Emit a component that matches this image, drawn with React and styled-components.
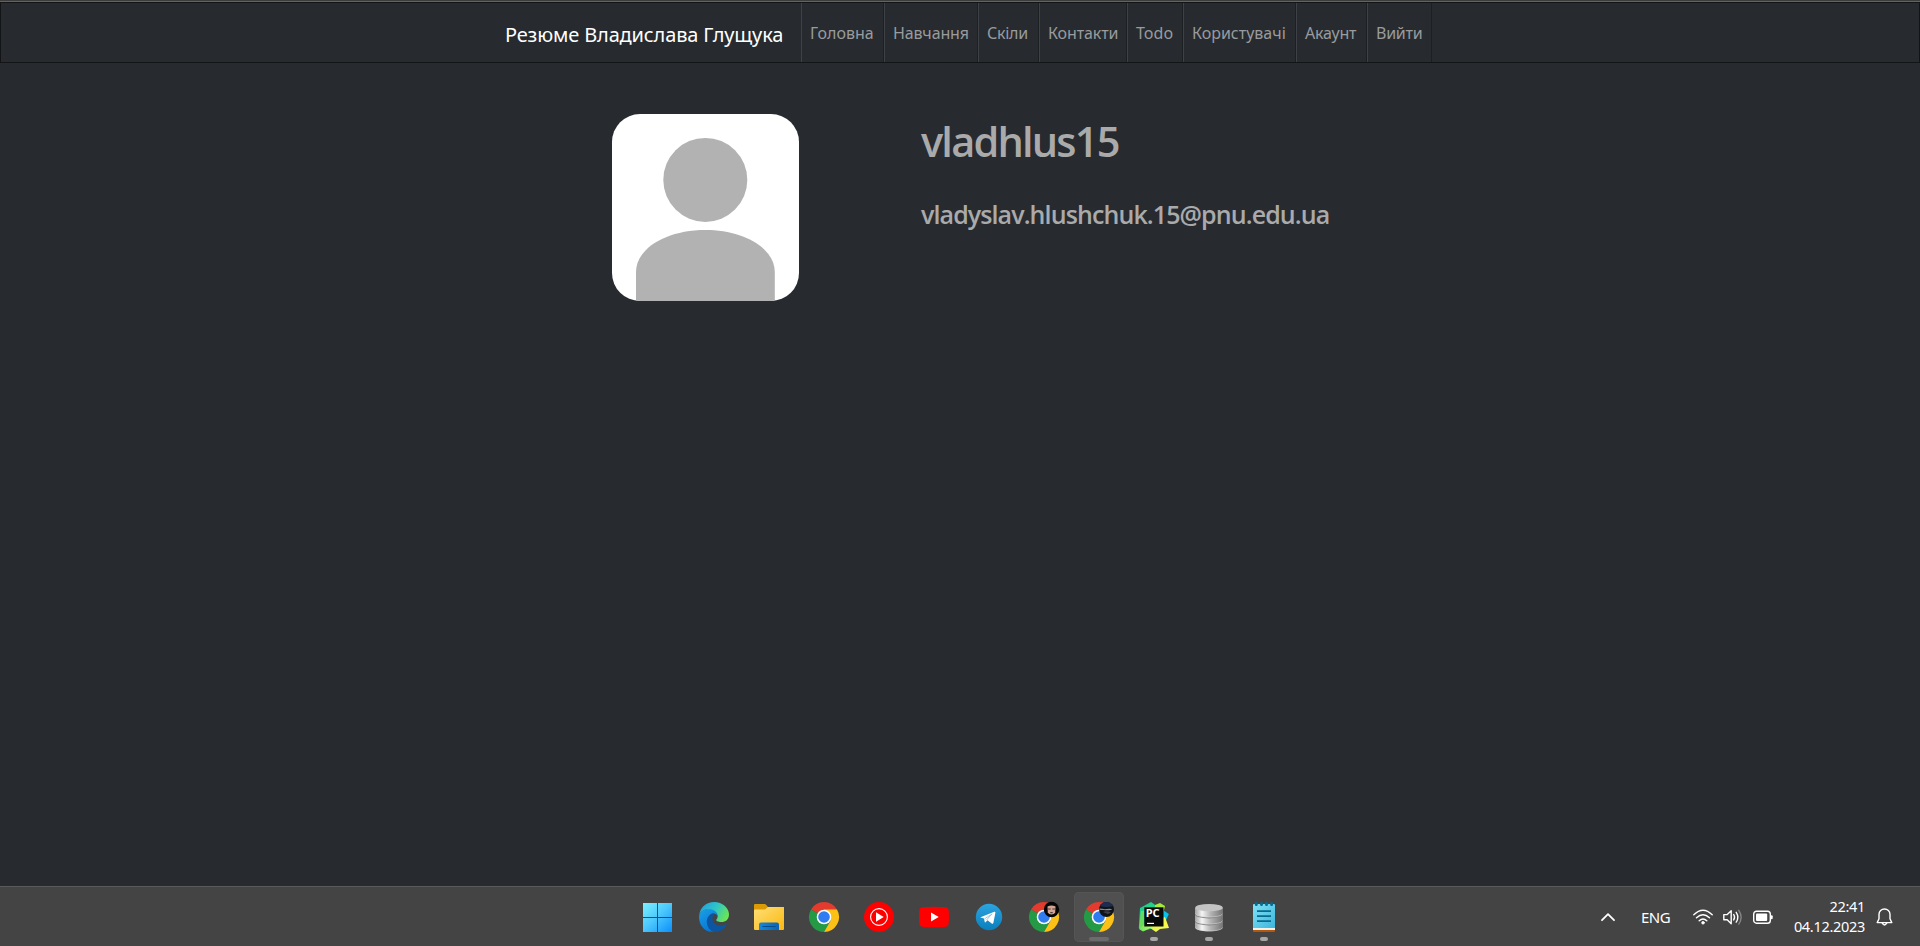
import React from "react";
import styled, { createGlobalStyle } from "styled-components";

const GlobalStyle = createGlobalStyle`
  * { box-sizing: border-box; }
  body {
    margin: 0;
    background: #272b30;
    font-family: "Noto Sans", "Open Sans", sans-serif;
    overflow: hidden;
  }
`;

const Screen = styled.div`
  display: flex;
  flex-direction: column;
  height: 946px;
  background: #272b30;
`;

const TopEdge = styled.div`
  height: 2px;
  flex: none;
  background: #3c3c3c;
  border-bottom: 1px solid #636363;
`;

const Navbar = styled.nav`
  display: flex;
  flex: none;
  height: 61px;
  padding-left: 504px;
  border: 1px solid #121416;
`;

const Brand = styled.a`
  width: 296px;
  line-height: 27px;
  padding-top: 18px;
  font-size: 20px;
  letter-spacing: ${(p) => p.$spacing}px;
  white-space: nowrap;
  color: #fff;
`;

const NavList = styled.ul`
  display: flex;
  margin: 0;
  padding: 0;
  list-style: none;
`;

const NavItem = styled.li`
  width: ${(p) => p.$width}px;
  padding: 18px 0 0 8px;
  border-left: 1px solid #3e4247;
  border-right: 1px solid #1d2023;
  font-size: 16px;
  line-height: 24px;
  letter-spacing: ${(p) => p.$spacing}px;
  white-space: nowrap;
  color: #999b9d;
`;

const Profile = styled.main`
  display: flex;
  flex: 1;
  align-items: flex-start;
  gap: 122px;
  padding: 51px 0 0 612px;
`;

const Avatar = styled.svg`
  display: block;
  width: 187px;
  height: 187px;
  border-radius: 28px;
  background: #fff;
`;

const Details = styled.section`
  display: flex;
  flex-direction: column;
  color: #aaa;
  font-family: "Open Sans", "Noto Sans", sans-serif;
  white-space: nowrap;
`;

const UserName = styled.h1`
  margin: 0;
  font-size: 41.5px;
  line-height: 54px;
  font-weight: 600;
  letter-spacing: ${(p) => p.$spacing}px;
`;

const Email = styled.h4`
  margin: 30px 0 0;
  font-size: 25px;
  line-height: 32px;
  font-weight: 600;
  letter-spacing: ${(p) => p.$spacing}px;
`;

const Taskbar = styled.footer`
  display: flex;
  flex: none;
  align-items: center;
  height: 60px;
  padding: 0 27px 0 634px;
  border-top: 1px solid #5a5b5c;
  background: #444;
`;

const Apps = styled.div`
  display: flex;
  gap: 5px;
`;

const AppButton = styled.div`
  display: flex;
  flex-direction: column;
  align-items: center;
  width: 50px;
  height: 50px;
  padding-top: 10px;
  border-radius: 5px;
  background: ${(p) => (p.$active ? "#505050" : "transparent")};
  box-shadow: ${(p) => (p.$active ? "inset 0 0 0 1px #555" : "none")};
`;

const AppIcon = styled.svg`
  display: block;
  width: 30px;
  height: 30px;
  overflow: visible;
`;

const Indicator = styled.span`
  width: ${(p) => (p.$active ? 20 : 8)}px;
  height: 4px;
  margin-top: 5px;
  border-radius: 2px;
  background: ${(p) => (p.$active ? "#6b6b6b" : "#a6a6a6")};
`;

const Tray = styled.div`
  display: flex;
  align-items: center;
  margin-left: auto;
  color: #fff;
`;

const TrayIcon = styled.svg`
  display: block;
  width: ${(p) => p.$width}px;
  height: 20px;
  margin-right: ${(p) => p.$after || 0}px;
  fill: none;
  stroke: #fff;
  stroke-width: 1.4;
  stroke-linecap: round;
  stroke-linejoin: round;
`;

const Language = styled.span`
  width: 52px;
  font-size: 15px;
  line-height: 20px;
  letter-spacing: -0.55px;
`;

const Clock = styled.div`
  display: flex;
  flex-direction: column;
  align-items: flex-end;
  width: 73px;
  margin: 0 11px 2px 0;
  font-size: 14.5px;
  line-height: 20px;
  letter-spacing: -0.3px;
  white-space: nowrap;
`;

const navItems = [
  ["Головна", 83, 0],
  ["Навчання", 94, -0.15],
  ["Скіли", 61, -0.25],
  ["Контакти", 88, -0.1],
  ["Todo", 56, 0.05],
  ["Користувачі", 113, 0],
  ["Акаунт", 71, -0.2],
  ["Вийти", 65, -0.25],
];

function WindowsIcon() {
  return (
    <AppIcon viewBox="0 0 30 30">
      <defs>
        <linearGradient id="win" gradientUnits="userSpaceOnUse" x1="0" y1="1" x2="27" y2="30">
          <stop offset="0" stopColor="#7cf0ff" />
          <stop offset="0.5" stopColor="#4cc8fb" />
          <stop offset="1" stopColor="#0f93fb" />
        </linearGradient>
      </defs>
      <path fill="url(#win)" d="M0 1h14v14H0zM15 1h14v14H15zM0 16h14v14H0zM15 16h14v14H15z" transform="translate(-1)" />
    </AppIcon>
  );
}

function EdgeIcon() {
  return (
    <AppIcon viewBox="0 0 30 30">
      <defs>
        <linearGradient id="edgeTop" x1="0" y1="0.2" x2="1" y2="0.6">
          <stop offset="0" stopColor="#249fdc" />
          <stop offset="0.5" stopColor="#2dc4cb" />
          <stop offset="1" stopColor="#6ce652" />
        </linearGradient>
        <linearGradient id="edgeLeft" x1="0" y1="0" x2="0.6" y2="1">
          <stop offset="0" stopColor="#1aa0e6" />
          <stop offset="1" stopColor="#0873d2" />
        </linearGradient>
      </defs>
      <path fill="url(#edgeLeft)" d="M0 15C0 9 6 7 10.5 7c6 0 9.500 3.500 9 7.500-1-2-3.500-3.500-6-3-5 1-5 12 5 15.500-1 2-4 3-6 2.800C5 29.500 0 22.500 0 15z" />
      <path fill="#0c55a0" d="M13.500 11.500c-7 2-8 13 0 18 6 1.500 12-2 14-6.500.3-.8-.3-1.200-1-.8-7 3.200-13.500-.5-13-6 .1-2 1-3.500 2-4.200z" />
      <path fill="url(#edgeTop)" d="M.1 13C1.500 5 7.500 0 15 0c8.500 0 15 6 15 12.500 0 5-3.500 7.500-7.500 7.500-3.500 0-5.700-1.200-5.200-2.200 3.500-4 .4-10.300-6.300-10.600C6 7 1.500 9 .1 13z" />
    </AppIcon>
  );
}

function FolderIcon() {
  return (
    <AppIcon viewBox="0 0 30 30">
      <defs>
        <linearGradient id="folder" x1="0" y1="0" x2="1" y2="1">
          <stop offset="0" stopColor="#ffdf77" />
          <stop offset="1" stopColor="#fbb80f" />
        </linearGradient>
        <linearGradient id="folderBase" x1="0" y1="0" x2="1" y2="0">
          <stop offset="0" stopColor="#1489dc" />
          <stop offset="1" stopColor="#0763b5" />
        </linearGradient>
      </defs>
      <path fill="#dc9b05" d="M0 3q0-1 1-1h9.500q1 0 1.600.7L14 5h15q1 0 1 1v8H0z" />
      <path fill="url(#folder)" d="M0 8.500q0-1 1-1h10L14 5h15.500q.5 0 .5.700V27q0 1-1 1H1q-1 0-1-1z" />
      <path fill="url(#folderBase)" d="M5 28v-5.500Q5 20.500 7 20.500h16q2 0 2 2V28z" />
      <rect x="8.300" y="24" width="13.400" height="1" rx=".5" fill="#064a8c" />
    </AppIcon>
  );
}

function ChromeLogo() {
  return (
    <g>
      <path fill="#e33b2e" d="M15 15 2 7.500A15 15 0 0 1 28 7.500z" />
      <path fill="#249a45" d="M15 15 2 7.500A15 15 0 0 0 15 30L21.500 18.700z" />
      <path fill="#fbc116" d="M15 7.500H28A15 15 0 0 1 15 30L21.500 18.700z" />
      <circle cx="15" cy="15" r="7.300" fill="#fff" />
      <circle cx="15" cy="15" r="5.800" fill="#2f7bf0" />
    </g>
  );
}

function ChromeIcon({ profile }) {
  return (
    <AppIcon viewBox="0 0 30 30">
      <ChromeLogo />
      {profile === "face" && (
        <g>
          <circle cx="22.500" cy="7.500" r="7.700" fill="#050505" />
          <path fill="#d3a594" d="M18.500 4.500q4-2 8 0l-.3 6q-1 2-3.700 2t-3.700-2z" />
          <path stroke="#4a3a38" strokeWidth="1.100" fill="none" d="M18.700 7h3m1.500 0h3M21.300 10.600h2.400" />
        </g>
      )}
      {profile === "photo" && (
        <g>
          <circle cx="22.500" cy="7.500" r="7.500" fill="#101418" />
          <path fill="#1d2c50" d="M15.800 4A7.500 7.500 0 0 1 29 4q-6 2.200-13.200 0z" />
          <path fill="#8790a3" d="M15.500 6.500q3 .2 5 .8 4-.8 7-.4l.3.800q-5 1-12.400.1z" />
          <path fill="#3c4149" d="M19 10q4-1.500 8 .5l-3 1.500z" />
        </g>
      )}
    </AppIcon>
  );
}

function YoutubeMusicIcon() {
  return (
    <AppIcon viewBox="0 0 30 30">
      <circle cx="15" cy="15" r="15" fill="#f00" />
      <circle cx="15" cy="15" r="8.400" fill="none" stroke="#fff" strokeWidth="1.100" />
      <path fill="#fff" d="M12 10.300 19.700 15 12 19.700z" />
    </AppIcon>
  );
}

function YoutubeIcon() {
  return (
    <AppIcon viewBox="0 0 30 30">
      <path fill="#f00" d="M3.500 5.200q11.500-1 23 0 2.800.3 3.200 3.300.6 6.500 0 13-.4 3-3.200 3.300-11.500 1-23 0-2.800-.3-3.200-3.300-.6-6.500 0-13 .4-3 3.200-3.300z" />
      <path fill="#fff" d="M12 10.600 19.700 15 12 19.400z" />
    </AppIcon>
  );
}

function TelegramIcon() {
  return (
    <AppIcon viewBox="0 0 30 30">
      <defs>
        <linearGradient id="telegram" x1="0" y1="0" x2="0" y2="1">
          <stop offset="0" stopColor="#2ba4df" />
          <stop offset="1" stopColor="#0b7fbd" />
        </linearGradient>
      </defs>
      <circle cx="15" cy="15" r="13.200" fill="url(#telegram)" />
      <path fill="#fff" d="m6.500 15.200 13.800-5.500q1.300-.3 1.100 1.100l-2 10q-.4 1.500-1.700.7l-4.200-3.200-2 2q-.7.5-.8-.5l-.7-3.200-3.400-1q-.7-.2-.1-.4z" />
      <path stroke="#8ec3e2" strokeWidth=".9" fill="none" d="m10.500 16.800 7.500-4.800-5.500 6" />
    </AppIcon>
  );
}

const PcLabel = styled.text`
  font: 700 9.8px "Noto Sans", sans-serif;
  fill: #fff;
`;

function PycharmIcon() {
  return (
    <AppIcon viewBox="0 0 30 30">
      <defs>
        <linearGradient id="pycharm" x1="0" y1="0" x2="1" y2="0.3">
          <stop offset="0" stopColor="#21c98c" />
          <stop offset="1" stopColor="#21d789" />
        </linearGradient>
        <linearGradient id="pcBottom" x1="0" y1="0" x2="1" y2="0">
          <stop offset="0" stopColor="#58e46c" />
          <stop offset="0.5" stopColor="#e9f650" />
          <stop offset="1" stopColor="#fcf84a" />
        </linearGradient>
      </defs>
      <path fill="url(#pycharm)" d="M1 6 12 0l7 5v20L4 29-.2 26z" />
      <path fill="#a7eb38" d="m16 3 5-2 5 3-2 8-8-4z" />
      <path fill="#08c3ea" d="m24 8 5.800 4-4 9-3-8z" />
      <path fill="url(#pcBottom)" d="m0 27 6-5 20-7 4 11-9 1-4 3-6-4-7 3.500z" />
      <path fill="#b1e832" d="m2 9 3 0v15l-5 3z" opacity=".5" />
      <rect x="5.300" y="5.300" width="19.200" height="19.200" fill="#080a09" />
      <PcLabel x="6.700" y="15" textLength="14" lengthAdjust="spacingAndGlyphs">PC</PcLabel>
      <rect x="8" y="20.800" width="7" height="1.200" fill="#fff" />
    </AppIcon>
  );
}

function DatabaseIcon() {
  return (
    <AppIcon viewBox="0 0 30 30">
      <defs>
        <linearGradient id="disk" x1="0" y1="0" x2="1" y2="0">
          <stop offset="0" stopColor="#a3a3a3" />
          <stop offset="0.250" stopColor="#f5f5f5" />
          <stop offset="0.550" stopColor="#b5b5b5" />
          <stop offset="1" stopColor="#737373" />
        </linearGradient>
      </defs>
      {[18, 11, 4].map((y) => (
        <g key={y} transform={`translate(0 ${y})`}>
          <path fill="url(#disk)" d="M1 2v5.500c1 5 27 5 28 0V2z" />
          <path fill="none" stroke="#dcdcdc" strokeWidth=".5" d="M1.500 7.800c2 4.300 25 4.300 27 0" />
          <ellipse cx="15" cy="1.700" rx="13.800" ry="3.700" fill={y === 4 ? "#c4c4c4" : "#858585"} />
        </g>
      ))}
    </AppIcon>
  );
}

function NotepadIcon() {
  return (
    <AppIcon viewBox="0 0 30 30">
      <defs>
        <linearGradient id="notepad" x1="0" y1="0" x2="1" y2="1">
          <stop offset="0" stopColor="#80e1f6" />
          <stop offset="1" stopColor="#3db5dc" />
        </linearGradient>
      </defs>
      <rect x="4" y="25" width="22" height="5" rx="1" fill="#b3570f" />
      <rect x="4" y="24" width="22" height="4" fill="#f4f1eb" />
      <path fill="url(#notepad)" d="M4 3q0-1 1-1h20q1 0 1 1v23H4z" />
      {[7.3, 12.5, 17.5, 22.6].map((x) => (
        <rect key={x} x={x - 1.4} y="0" width="2.800" height="4" rx="1.300" fill="#086a8d" />
      ))}
      <path stroke="#086a8d" strokeWidth="1.800" d="M8 9.100h14M8 14.100h14M8 19.100h14" />
    </AppIcon>
  );
}

const apps = [
  { key: "start", icon: <WindowsIcon /> },
  { key: "edge", icon: <EdgeIcon /> },
  { key: "files", icon: <FolderIcon /> },
  { key: "chrome", icon: <ChromeIcon /> },
  { key: "music", icon: <YoutubeMusicIcon /> },
  { key: "youtube", icon: <YoutubeIcon /> },
  { key: "telegram", icon: <TelegramIcon /> },
  { key: "chrome-face", icon: <ChromeIcon profile="face" /> },
  { key: "chrome-photo", icon: <ChromeIcon profile="photo" />, open: true, active: true },
  { key: "pycharm", icon: <PycharmIcon />, open: true },
  { key: "database", icon: <DatabaseIcon />, open: true },
  { key: "notepad", icon: <NotepadIcon />, open: true },
];

export default function App() {
  return (
    <Screen>
      <GlobalStyle />
      <TopEdge />
      <Navbar>
        <Brand $spacing={-0.15}>Резюме Владислава Глущука</Brand>
        <NavList>
          {navItems.map(([label, width, spacing]) => (
            <NavItem key={label} $width={width} $spacing={spacing}>{label}</NavItem>
          ))}
        </NavList>
      </Navbar>
      <Profile>
        <Avatar viewBox="0 0 187 187">
          <circle cx="93.300" cy="65.900" r="42" fill="#b2b2b2" />
          <path fill="#b2b2b2" d="M24 187v-29c0-24 31-42 69.300-42s69.500 18 69.500 42v29z" />
        </Avatar>
        <Details>
          <UserName $spacing={-1.8}>vladhlus15</UserName>
          <Email $spacing={-0.9}>vladyslav.hlushchuk.15@pnu.edu.ua</Email>
        </Details>
      </Profile>
      <Taskbar>
        <Apps>
          {apps.map((app) => (
            <AppButton key={app.key} $active={app.active}>
              {app.icon}
              {app.open && <Indicator $active={app.active} />}
            </AppButton>
          ))}
        </Apps>
        <Tray>
          <TrayIcon $width={14} $after={26} viewBox="0 0 14 20">
            <path strokeWidth="1.800" d="m1 13.200 6-6 6 6" />
          </TrayIcon>
          <Language>ENG</Language>
          <TrayIcon $width={20} $after={10} viewBox="0 0 20 20">
            <path d="M.8 7.700q9.200-9 18.400 0M3.500 10.800q6.500-6.300 13 0M6.200 13.700q3.800-3.600 7.600 0" />
            <circle cx="10" cy="15.800" r="1.300" fill="#fff" strokeWidth=".8" />
          </TrayIcon>
          <TrayIcon $width={20} $after={10} viewBox="0 0 20 20">
            <path d="M.8 7.600h3.400L8.200 3.700v13l-4-3.900H.8zM10.700 7.500q1.700 2.700 0 5.400M13.200 5.300q3.300 4.900 0 9.800" />
            <path stroke="#858585" d="M15.800 3.300q4.600 6.900 0 13.800" />
          </TrayIcon>
          <TrayIcon $width={20} $after={19} viewBox="0 0 20 20">
            <rect x=".7" y="4.200" width="16.600" height="12" rx="2.800" />
            <rect x="3" y="6.500" width="11.200" height="7.400" rx="1" fill="#fff" stroke="none" />
            <path strokeWidth="2" d="M18.700 9.200v2" />
          </TrayIcon>
          <Clock>
            <span>22:41</span>
            <span>04.12.2023</span>
          </Clock>
          <TrayIcon $width={17} viewBox="0 0 17 20">
            <path d="M1.200 15.600 3 11.700V7.500a5.500 5.500 0 0 1 11 0v4.200l1.800 3.900zM6.200 16.200q2.300 3.600 4.600 0" />
          </TrayIcon>
        </Tray>
      </Taskbar>
    </Screen>
  );
}
